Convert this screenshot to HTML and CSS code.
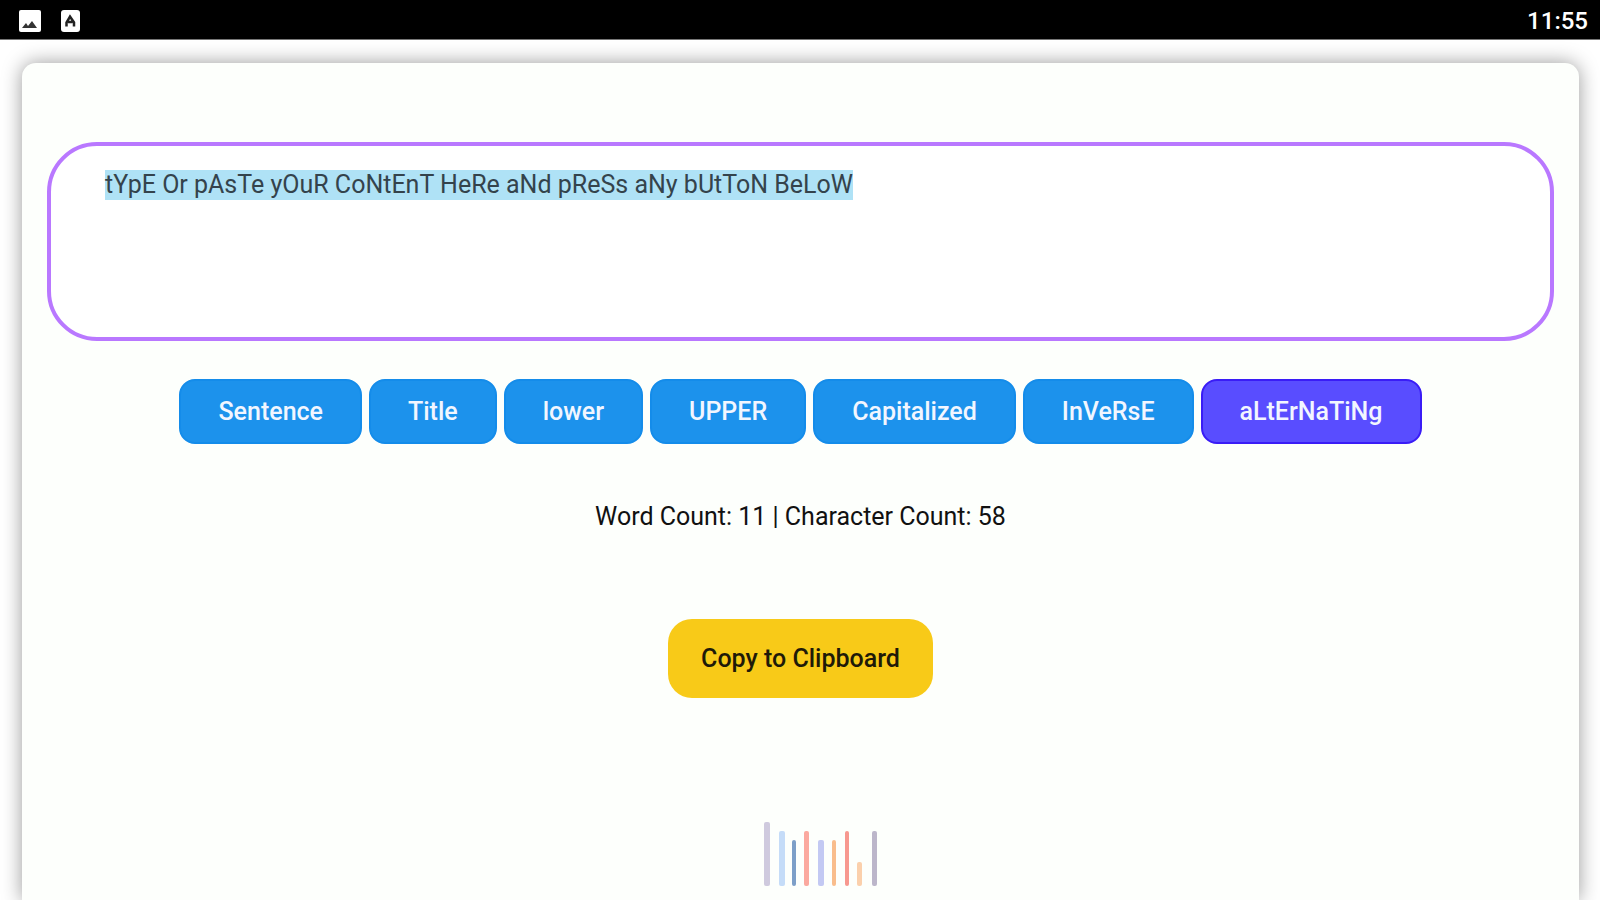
FILE: index.html
```
<!DOCTYPE html>
<html lang="en">
<head>
<meta charset="utf-8">
<meta name="viewport" content="width=device-width, initial-scale=1">
<title>Case Converter</title>
<link rel="stylesheet" href="styles.css">
</head>
<body>
<header class="status-bar">
  <div class="status-icons">
    <svg class="status-icon" viewBox="0 0 24 24" aria-hidden="true"><rect x="1" y="1" width="22" height="22" rx="2" fill="#fff"/><path d="M4 19l4-5 2 3 4-5 5 7z" fill="#333"/></svg>
    <svg class="status-icon" viewBox="0 0 24 24" aria-hidden="true"><rect x="3" y="1" width="19" height="22" rx="3" fill="#fff"/><path d="M8.500 17.500v-4l3.500-6 4 6v4M10 13h4.500" fill="none" stroke="#222" stroke-width="2.500"/></svg>
  </div>
  <time class="clock">11:55</time>
</header>
<main class="card">
  <textarea class="editor" aria-label="Content" spellcheck="false" autofocus>tYpE Or pAsTe yOuR CoNtEnT HeRe aNd pReSs aNy bUtToN BeLoW</textarea>
  <div class="cases">
    <button class="case" type="button">Sentence</button>
    <button class="case" type="button">Title</button>
    <button class="case" type="button">lower</button>
    <button class="case" type="button">UPPER</button>
    <button class="case" type="button">Capitalized</button>
    <button class="case" type="button">InVeRsE</button>
    <button class="case case-active" type="button">aLtErNaTiNg</button>
  </div>
  <p class="counts">Word Count: 11 | Character Count: 58</p>
  <button class="copy" type="button">Copy to Clipboard</button>
  <svg class="bars" viewBox="0 0 116 66" aria-hidden="true">
    <rect x="1" y="1" width="6" height="64" rx="2" fill="#cfcade"/>
    <rect x="16" y="10" width="6" height="55" rx="2" fill="#c5dcf8"/>
    <rect x="29" y="19" width="4" height="46" rx="2" fill="#7d9fc8"/>
    <rect x="41" y="10" width="5" height="55" rx="2" fill="#fba99f"/>
    <rect x="55" y="19" width="6" height="46" rx="2" fill="#c3c9f3"/>
    <rect x="69" y="19" width="4" height="46" rx="2" fill="#f9bd8c"/>
    <rect x="82" y="10" width="4" height="55" rx="2" fill="#f7988f"/>
    <rect x="94" y="41" width="5" height="24" rx="2" fill="#fbd0ac"/>
    <rect x="109" y="10" width="5" height="55" rx="2" fill="#bcb6ca"/>
  </svg>
</main>
<script src="app.js"></script>
</body>
</html>
```
FILE: styles.css
```
* {
  box-sizing: border-box;
}

body {
  margin: 0;
  height: 100vh;
  overflow: hidden;
  display: flex;
  flex-direction: column;
  background: #fff;
  color: #111;
  font-family: Roboto, sans-serif;
  font-size: 25px;
}

.status-bar {
  flex: none;
  display: flex;
  align-items: center;
  justify-content: space-between;
  height: 40px;
  padding: 3px 12px 0 18px;
  background: #000;
  border-bottom: 1px solid #777;
  color: #fff;
}

.status-icons {
  display: flex;
  gap: 16px;
}

.status-icon {
  width: 24px;
  height: 24px;
}

.clock {
  font-size: 24px;
  font-weight: 500;
}

.card {
  flex: 1 0 auto;
  display: flex;
  flex-direction: column;
  align-items: center;
  margin: 23px 21px 0 22px;
  padding: 79px 25px 14px;
  border-radius: 14px 14px 0 0;
  background: #fdfffc;
  box-shadow: 0 0 20px rgba(0, 0, 0, 0.4);
}

.editor {
  display: block;
  width: 100%;
  height: 199px;
  padding: 24px 54px;
  border: 4px solid #b978ff;
  border-radius: 50px;
  outline: none;
  resize: none;
  background: #fff;
  color: #34434c;
  font: 400 25px/30px Roboto, sans-serif;
}

.editor::selection {
  background: rgba(174, 226, 246, 0.99);
  color: #34434c;
}

.cases {
  display: flex;
  flex-wrap: wrap;
  justify-content: center;
  gap: 7px;
  margin-top: 38px;
}

.case {
  height: 65px;
  padding: 0 37px;
  border: 2px solid #148cea;
  border-radius: 16px;
  background: #1c92ec;
  color: #f2f6ff;
  font: 500 25px/30px Roboto, sans-serif;
}

.case-active {
  border-color: #3a1cf6;
  background: #594dff;
}

.counts {
  margin: 58px 0 0;
  line-height: 30px;
}

.copy {
  height: 79px;
  margin-top: 87px;
  padding: 0 33px;
  border: 0;
  border-radius: 24px;
  background: #f8ca18;
  color: #1f1a08;
  font: 500 25px/30px Roboto, sans-serif;
}

.bars {
  width: 116px;
  height: 66px;
  margin-top: 123px;
  margin-left: 40px;
}
```
FILE: app.js
```
const editor = document.querySelector('.editor');
editor.focus();
editor.select();
```
